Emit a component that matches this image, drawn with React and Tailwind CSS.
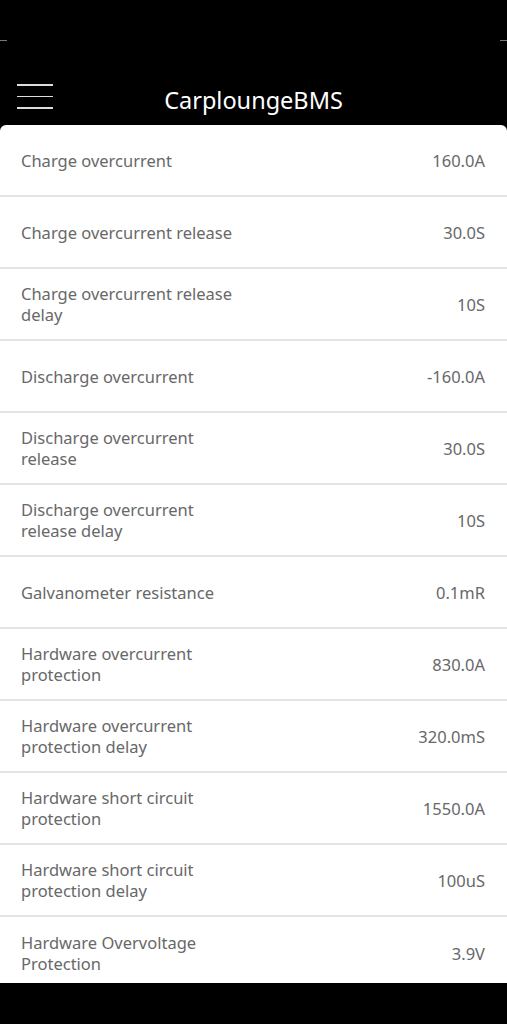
import React from "react";

const rows = [
  ["Charge overcurrent", "160.0A"],
  ["Charge overcurrent release", "30.0S"],
  ["Charge overcurrent release delay", "10S"],
  ["Discharge overcurrent", "-160.0A"],
  ["Discharge overcurrent release", "30.0S"],
  ["Discharge overcurrent release delay", "10S"],
  ["Galvanometer resistance", "0.1mR"],
  ["Hardware overcurrent protection", "830.0A"],
  ["Hardware overcurrent protection delay", "320.0mS"],
  ["Hardware short circuit protection", "1550.0A"],
  ["Hardware short circuit protection delay", "100uS"],
  ["Hardware Overvoltage Protection", "3.9V"],
];

export default function App() {
  return (
    <div
      className="w-[507px] h-[1024px] bg-black flex flex-col overflow-hidden"
      style={{ fontFamily: '"Noto Sans", Roboto, sans-serif' }}
    >
      {/* status area with the faint corner marks */}
      <div className="h-[70px] shrink-0 relative">
        <div className="absolute left-0 top-[40px] w-[7px] h-px bg-[#777]" />
        <div className="absolute right-0 top-[40px] w-[7px] h-px bg-[#777]" />
      </div>

      {/* app bar */}
      <div className="h-[55px] shrink-0 flex items-center relative">
        <div className="ml-[17px] w-[36px] flex flex-col gap-[10px] pb-[2px]">
          <div className="h-[1.5px] bg-[#ddd]" />
          <div className="h-[1.5px] bg-[#ddd]" />
          <div className="h-[1.5px] bg-[#ddd]" />
        </div>
        <div className="absolute inset-x-0 top-[31px] -translate-y-1/2 text-center text-white text-[23.5px] leading-none">
          CarploungeBMS
        </div>
      </div>

      {/* settings list, cut off by the navigation bar */}
      <div className="flex-1 min-h-0 overflow-hidden bg-white rounded-t-[6px]">
        {rows.map(([label, value], i) => (
          <div
            key={label}
            className={
              "h-[72px] flex items-center justify-between pl-[21px] pr-[22px] text-[#686868] text-[16.5px] leading-[21px] " +
              (i < rows.length - 1 ? "border-b-2 border-[#e4e4e4]" : "")
            }
          >
            <span className="max-w-[225px]">{label}</span>
            <span>{value}</span>
          </div>
        ))}
      </div>
      <div className="h-[41px] shrink-0 bg-black" />
    </div>
  );
}
